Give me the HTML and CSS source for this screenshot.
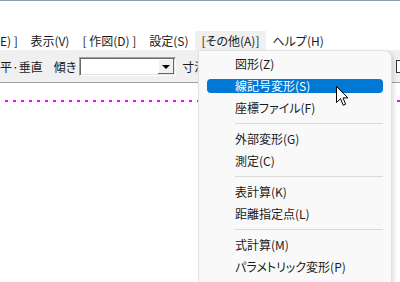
FILE: index.html
```html
<!DOCTYPE html>
<html lang="ja">
<head>
    <meta charset="UTF-8">
    <title>その他メニュー</title>
    <link rel="stylesheet" href="styles.css">
</head>
<body>
    <div class="window">
        <div class="topline"></div>
        <div class="blank"></div>

        <div class="menubar">
            <span class="mb-item first">E) ]</span>
            <span class="mb-item">表示(V)</span>
            <span class="mb-item">[ 作図(D) ]</span>
            <span class="mb-item">設定(S)</span>
            <span class="mb-item open">[その他(A)]</span>
            <span class="mb-item">ヘルプ(H)</span>
        </div>

        <div class="toolbar">
            <span class="tb-label first">平·垂直</span>
            <span class="tb-label">傾き</span>
            <div class="combo">
                <div class="combo-text"></div>
                <div class="combo-btn"><span class="arrow"></span></div>
            </div>
            <span class="tb-label size">寸法</span>
            <span class="tb-check"></span>
        </div>

        <div class="canvas">
            <div class="dots"></div>
        </div>

        <!-- [その他(A)] のドロップダウン -->
        <div class="dropdown">
            <div class="item">図形(Z)</div>
            <div class="item active">線記号変形(S)</div>
            <div class="item">座標ファイル(F)</div>
            <div class="sep"></div>
            <div class="item">外部変形(G)</div>
            <div class="item">測定(C)</div>
            <div class="sep"></div>
            <div class="item">表計算(K)</div>
            <div class="item">距離指定点(L)</div>
            <div class="sep"></div>
            <div class="item">式計算(M)</div>
            <div class="item">パラメトリック変形(P)</div>
        </div>

        <svg class="cursor" width="14" height="22" viewBox="0 0 14 22">
            <path d="M0.5 0.5 L0.5 16.5 L4.5 12.7 L7.2 19.2 L9.6 18.2 L7 11.9 L12 11.9 Z" fill="#fff" stroke="#000" stroke-width="1"/>
        </svg>
    </div>
</body>
</html>
```

FILE: styles.css
```css
body {
    margin: 0;
    background: #fff;
    font-family: "Noto Sans CJK JP", "Noto Sans", sans-serif;
    font-size: 12px;
    font-feature-settings: "palt";
    color: #1a1a1a;
}

.window {
    position: relative;
    width: 400px;
    height: 282px;
    overflow: hidden;
    background: #fff;
}

.topline {
    height: 1px;
    background: #8a9aab;
}

.blank {
    height: 30px;
}

.menubar {
    display: flex;
    height: 19px;
    line-height: 19px;
    white-space: nowrap;
}

.mb-item {
    padding: 0 6.5px;
}

.mb-item.first {
    padding-left: 0;
    padding-right: 6px;
}

.mb-item.open {
    background: #f0f0f0;
}

.toolbar {
    display: flex;
    align-items: center;
    height: 32px;
    background: #f0f0f0;
    border-bottom: 1px solid #a0a0a0;
    white-space: nowrap;
}

.toolbar > * {
    flex-shrink: 0;
}

.tb-label {
    margin-left: 11px;
}

.tb-label.first {
    margin-left: 0;
}

.tb-label.size {
    margin-left: 6px;
}

.combo {
    display: flex;
    width: 93px;
    height: 15px;
    margin-left: 3px;
    padding: 1px;
    background: #fff;
    border: 1px solid;
    border-color: #a0a0a0 #fff #fff #a0a0a0;
    box-shadow: inset 1px 1px 0 #696969, inset -1px -1px 0 #e3e3e3;
}

.combo-text {
    flex: 1;
}

.combo-btn {
    display: flex;
    align-items: center;
    justify-content: center;
    width: 16px;
    height: 15px;
    background: #f0f0f0;
    box-shadow: inset -1px -1px 0 #696969, inset 1px 1px 0 #fff;
}

.arrow {
    width: 0;
    height: 0;
    border-left: 4px solid transparent;
    border-right: 4px solid transparent;
    border-top: 4px solid #000;
    margin-top: 1px;
}

.tb-check {
    width: 11px;
    height: 11px;
    margin-left: 190px;
    border: 1px solid #333;
    background: #fff;
}

.canvas {
    height: 199px;
    position: relative;
}

.dots {
    position: absolute;
    left: 5px;
    right: 0;
    top: 17px;
    height: 2px;
    background: repeating-linear-gradient(to right, #ff00ff 0 3px, transparent 3px 8px);
}

.dropdown {
    position: absolute;
    left: 198px;
    top: 50px;
    width: 192px;
    height: 240px;
    display: flex;
    flex-direction: column;
    padding-top: 2px;
    background: #f9f9f9;
    border: 1px solid #e2e2e2;
    border-radius: 0 8px 0 0;
    box-shadow: 2px 2px 4px rgba(0, 0, 0, 0.12);
}

.item {
    height: 14px;
    line-height: 14px;
    margin: 4px 8px;
    padding-left: 28px;
    border-radius: 4px;
    white-space: nowrap;
}

.item.active {
    background: #0078d4;
    color: #fff;
}

.sep {
    height: 1px;
    margin: 4px 8px 4px 36px;
    background: #d9d9d9;
}

.cursor {
    position: absolute;
    left: 336px;
    top: 86px;
}
```
